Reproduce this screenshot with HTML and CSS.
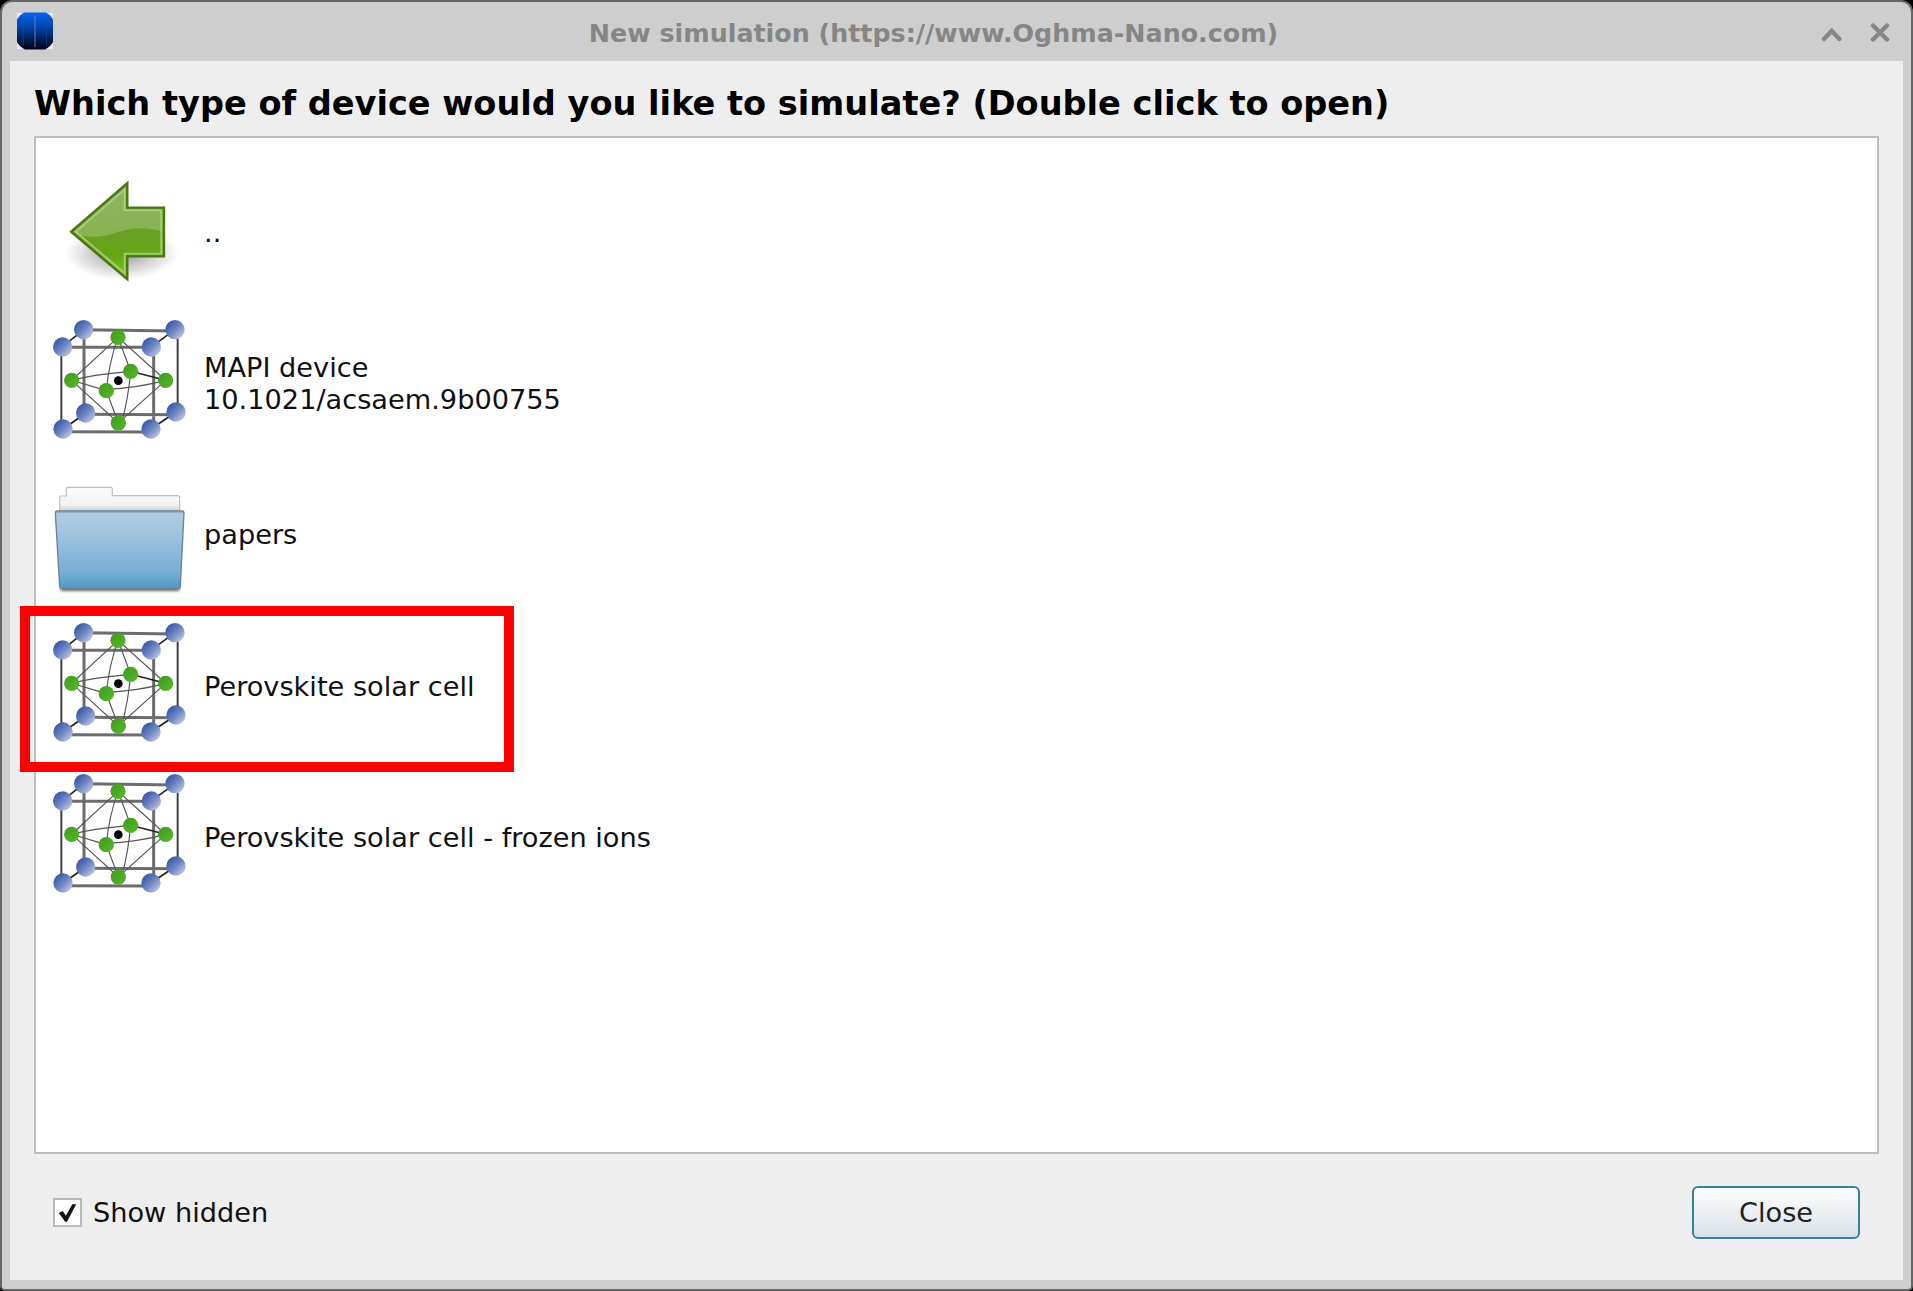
FILE: index.html
```
<!DOCTYPE html>
<html lang="en">
<head>
  <meta charset="UTF-8">
  <title>New simulation (https://www.Oghma-Nano.com)</title>
  <link rel="stylesheet" href="styles.css">
</head>
<body>
  <!-- shared icon artwork -->
  <svg class="defs" width="0" height="0">
    <defs>
      <linearGradient id="blue-ball" x1="0.1" y1="0.15" x2="0.85" y2="0.9">
        <stop offset="0.1" stop-color="#3f5dab"/>
        <stop offset="0.55" stop-color="#7489c3"/>
        <stop offset="1" stop-color="#bcc5e4"/>
      </linearGradient>
      <linearGradient id="green-ball" x1="0" y1="0" x2="1" y2="1">
        <stop offset="0" stop-color="#3f9a1d"/>
        <stop offset="1" stop-color="#55b92a"/>
      </linearGradient>
      <symbol id="lattice" viewBox="0 23 480 454">
        <g fill="none" stroke="#3f3f3f" stroke-width="6">
          <path d="M64 140V388M413 88V335"/>
        </g>
        <g fill="none" stroke="#6c6c6c" stroke-width="9">
          <path d="M132 88V340M131 88L405 92M68 141H335M341 140V385M137 342L408 343M70 394L333 395"/>
        </g>
        <path d="M68 139L131 88M335 139L405 88M70 386L137 338M333 386L408 335" stroke="#222" stroke-width="5"/>
        <g fill="none" stroke="#555" stroke-width="3.500">
          <path d="M234 111L95 240L235 368L377 240Z"/>
          <path d="M234 111Q206 190 199 271L235 368"/>
          <path d="M234 111L272 213Q264 300 246 362"/>
          <path d="M95 240Q150 224 272 213M95 240L199 271M199 267Q285 264 377 240"/>
        </g>
        <path d="M272 213L377 240" stroke="#222" stroke-width="5"/>
        <circle cx="235" cy="241" r="13" fill="#000"/>
        <g fill="url(#blue-ball)">
          <circle cx="131" cy="88" r="29"/>
          <circle cx="405" cy="88" r="29"/>
          <circle cx="68" cy="140" r="29"/>
          <circle cx="334" cy="140" r="29"/>
          <circle cx="137" cy="338" r="29"/>
          <circle cx="408" cy="335" r="29"/>
          <circle cx="69" cy="386" r="29"/>
          <circle cx="333" cy="386" r="29"/>
        </g>
        <g fill="url(#green-ball)">
          <circle cx="234" cy="111" r="23"/>
          <circle cx="95" cy="240" r="23"/>
          <circle cx="272" cy="213" r="23"/>
          <circle cx="377" cy="240" r="23"/>
          <circle cx="199" cy="271" r="23"/>
          <circle cx="235" cy="368" r="23"/>
        </g>
      </symbol>
    </defs>
  </svg>

  <div class="window">
    <header class="titlebar">
      <svg class="app-icon" viewBox="0 0 38 38">
        <defs>
          <linearGradient id="app" x1="0" y1="0" x2="0" y2="1">
            <stop offset="0" stop-color="#0563f0"/>
            <stop offset="0.35" stop-color="#0348b4"/>
            <stop offset="0.75" stop-color="#021d50"/>
            <stop offset="1" stop-color="#010518"/>
          </linearGradient>
        </defs>
        <path d="M1 1H8L1 8ZM37 1H30L37 8ZM1 37H8L1 30ZM37 37H30L37 30Z" fill="#e9edf6"/>
        <path d="M8 0.500H30Q35 3 37 8V30Q35 34 29 37.500H9Q3 34 1 30V8Q3 3 8 0.500Z" fill="url(#app)"/>
        <path d="M19 4V35" stroke="#6d86b8" stroke-width="0.9"/>
        <path d="M7.500 7V34M30.500 7V34" stroke="#1d4d9c" stroke-width="0.5"/>
      </svg>
      <div class="title">New simulation (https://www.Oghma-Nano.com)</div>
      <svg class="win-buttons" viewBox="0 0 72 24">
        <path d="M3 18L10.700 10L18.400 18M52 4.500L66 18.500M66 4.500L52 18.500" fill="none" stroke="#868686" stroke-width="4.400" stroke-linecap="round"/>
      </svg>
    </header>

    <main class="content">
      <h1>Which type of device would you like to simulate? (Double click to open)</h1>

      <ul class="device-list">
        <li>
          <svg class="icon" viewBox="30 -11 480 454">
            <defs>
              <linearGradient id="arrow" x1="0" y1="0" x2="0" y2="1">
                <stop offset="0" stop-color="#80ab4d"/>
                <stop offset="0.5" stop-color="#699f25"/>
                <stop offset="0.75" stop-color="#63a611"/>
                <stop offset="1" stop-color="#7cc81c"/>
              </linearGradient>
              <linearGradient id="gloss" x1="0" y1="0" x2="0" y2="1">
                <stop offset="0" stop-color="#fff" stop-opacity="0.14"/>
                <stop offset="1" stop-color="#fff" stop-opacity="0.22"/>
              </linearGradient>
              <radialGradient id="shade">
                <stop offset="0" stop-color="#000" stop-opacity="0.4"/>
                <stop offset="0.55" stop-color="#000" stop-opacity="0.18"/>
                <stop offset="1" stop-color="#000" stop-opacity="0"/>
              </radialGradient>
            </defs>
            <ellipse cx="275" cy="278" rx="170" ry="80" fill="url(#shade)"/>
            <path d="M292 67V141H402V287H292V356L123 213Z" fill="url(#arrow)" stroke="#4b7416" stroke-width="7"/>
            <path d="M286 85V148H396V212C320 190 270 212 238 222C200 232 165 229 140 220L132 213Z" fill="url(#gloss)"/>
            <path d="M284 86V149H394V279H284V338L137 213Z" fill="none" stroke="#b6d58c" stroke-opacity="0.75" stroke-width="6"/>
          </svg>
          <span>..</span>
        </li>
        <li>
          <svg class="icon"><use href="#lattice"/></svg>
          <span>MAPI device<br>10.1021/acsaem.9b00755</span>
        </li>
        <li>
          <svg class="icon" viewBox="0 -33 480 454">
            <defs>
              <linearGradient id="folder" x1="0" y1="0" x2="0" y2="1">
                <stop offset="0" stop-color="#b1cde1"/>
                <stop offset="0.3" stop-color="#9fc4de"/>
                <stop offset="0.82" stop-color="#71add3"/>
                <stop offset="1" stop-color="#5595c1"/>
              </linearGradient>
              <linearGradient id="paper" x1="0" y1="0" x2="0" y2="1">
                <stop offset="0" stop-color="#fafafa"/>
                <stop offset="0.7" stop-color="#f4f4f4"/>
                <stop offset="1" stop-color="#ccc"/>
              </linearGradient>
              <filter id="soft" x="-10%" y="-100%" width="120%" height="300%"><feGaussianBlur stdDeviation="5"/></filter>
            </defs>
            <rect x="60" y="342" width="360" height="18" rx="8" fill="#666" filter="url(#soft)"/>
            <path d="M59 122V80Q59 75 64 75H79V53Q79 49 84 49H212Q217 49 217 54V74H413Q419 74 419 80V122Z" fill="url(#paper)" stroke="#bdbdbd" stroke-width="3.500"/>
            <path d="M52 120H426Q432 120 432 127L421 346Q420 352 413 352H66Q60 352 59 346L46 127Q46 120 52 120Z" fill="url(#folder)" stroke="#6c8290" stroke-width="4"/>
            <path d="M50 125H428" stroke="#93adbd" stroke-width="3"/>
          </svg>
          <span>papers</span>
        </li>
        <li class="marked">
          <svg class="icon"><use href="#lattice"/></svg>
          <span>Perovskite solar cell</span>
        </li>
        <li>
          <svg class="icon"><use href="#lattice"/></svg>
          <span>Perovskite solar cell - frozen ions</span>
        </li>
      </ul>

      <footer class="actions">
        <label class="show-hidden">
          <span class="checkbox">
            <svg viewBox="0 0 26 26"><path d="M4 13.500L10.500 22.500H12.500L22 4.500H18L11.300 16.500L8 11.500Z" fill="#111"/></svg>
          </span>
          <span>Show hidden</span>
        </label>
        <button class="close">Close</button>
      </footer>
    </main>
  </div>
</body>
</html>
```

FILE: styles.css
```
*,
*::after {
  box-sizing: border-box;
}

body {
  margin: 0;
  height: 100vh;
  overflow: hidden;
  background: #000;
  font-family: "DejaVu Sans", sans-serif;
  font-size: 27.2px;
  color: #111;
}

.defs {
  position: absolute;
}

.window {
  height: 100vh;
  display: flex;
  flex-direction: column;
  padding: 0 8px 9px;
  background: #cecece;
  border: 2px solid #666;
  border-radius: 12px 12px 5px 5px;
}

.titlebar {
  height: 59px;
  flex: none;
  display: flex;
  align-items: center;
  padding: 0 10px 0 6px;
}

.app-icon {
  width: 38px;
  height: 38px;
  margin-bottom: 1px;
}

.title {
  flex: 1;
  padding: 2px 8px 0 0;
  text-align: center;
  font-weight: bold;
  font-size: 25.35px;
  color: #868686;
}

.win-buttons {
  width: 72px;
  height: 24px;
  margin-top: 2px;
}

.content {
  flex: 1;
  display: flex;
  flex-direction: column;
  padding: 0 24px;
  background: #eee;
}

h1 {
  margin: 0;
  height: 75px;
  line-height: 86px;
  font-size: 33.6px;
  color: #000;
  white-space: nowrap;
}

.device-list {
  height: 1018px;
  margin: 0;
  padding: 19px 4px;
  list-style: none;
  background: #fff;
  border: 2px solid #bdbdbd;
}

.device-list li {
  position: relative;
  height: 151.3px;
  display: flex;
  align-items: center;
  gap: 4px;
  line-height: 31.7px;
}

.icon {
  width: 160px;
  height: 151.3px;
}

/* red frame around the entry to pick */
.marked::after {
  content: "";
  position: absolute;
  z-index: 1;
  left: -20px;
  top: -5px;
  width: 494px;
  height: 166px;
  border: 10px solid #f00;
}

.actions {
  height: 116px;
  display: flex;
  align-items: center;
  justify-content: space-between;
  padding: 0 19px;
}

.show-hidden {
  display: flex;
  align-items: center;
  gap: 11px;
}

.checkbox {
  width: 29px;
  height: 29px;
  background: #fff;
  border: 2px solid #b9b9b9;
}

.checkbox svg {
  display: block;
}

.close {
  width: 168px;
  height: 53px;
  font: inherit;
  color: #222;
  background: linear-gradient(#fdfefe, #d9e1e6);
  border: 2px solid #3a7d9f;
  border-radius: 6px;
}
```
